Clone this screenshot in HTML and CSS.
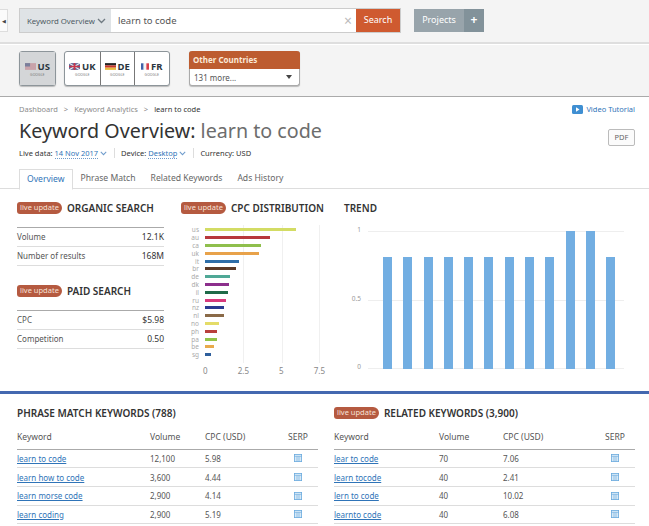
FILE: index.html
```html
<!DOCTYPE html>
<html lang="en">

<head>
    <meta charset="UTF-8">
    <title>Keyword Overview: learn to code</title>
    <link rel="stylesheet" href="styles.css">
</head>

<body>
    <div class="search-bar">
        <span class="side-toggle">&#9664;</span>
        <div class="search-group">
            <span class="search-type">Keyword Overview <svg class="chevron" width="9" height="6" viewBox="0 0 9 6"><path d="M1 1l3.500 3.500L8 1" fill="none" stroke="#6f7a82" stroke-width="1.300"/></svg></span>
            <span class="search-input">learn to code<span class="search-clear">&times;</span></span>
            <span class="search-btn">Search</span>
        </div>
        <div class="projects">
            <span class="projects-label">Projects</span>
            <span class="projects-add">+</span>
        </div>
    </div>

    <div class="country-bar">
        <div class="country-group">
            <div class="country active">
                <span class="country-name"><svg class="flag" viewBox="0 0 13 8"><rect width="13" height="8" fill="#c9a3aa"/><rect width="6" height="4" fill="#7a7f9c"/></svg>US</span>
                <span class="country-sub">GOOGLE</span>
            </div>
        </div>
        <div class="country-group">
            <div class="country">
                <span class="country-name"><svg class="flag" viewBox="0 0 13 8"><rect width="13" height="8" fill="#5a6a9c"/><path d="M0 0l13 8M13 0L0 8" stroke="#eee" stroke-width="1.500"/><path d="M6.500 0v8M0 4h13" stroke="#c8364a" stroke-width="2"/></svg>UK</span>
                <span class="country-sub">GOOGLE</span>
            </div>
            <div class="country">
                <span class="country-name"><svg class="flag" viewBox="0 0 13 8"><rect width="13" height="2.700" fill="#222"/><rect y="2.700" width="13" height="2.700" fill="#c8362c"/><rect y="5.400" width="13" height="2.600" fill="#e8b93a"/></svg>DE</span>
                <span class="country-sub">GOOGLE</span>
            </div>
            <div class="country">
                <span class="country-name"><svg class="flag flag-fr" viewBox="0 0 10 8"><rect width="3.300" height="8" fill="#3f62a8"/><rect x="3.300" width="3.400" height="8" fill="#f4f4f4"/><rect x="6.700" width="3.300" height="8" fill="#d8404a"/></svg>FR</span>
                <span class="country-sub">GOOGLE</span>
            </div>
        </div>
        <div class="other-countries">
            <div class="other-title">Other Countries</div>
            <div class="other-select">131 more...<span class="other-arrow"></span></div>
        </div>
    </div>

    <div class="page-head">
        <div class="crumbs-row">
            <div class="crumbs">
                <span>Dashboard</span><span class="crumb-sep">&gt;</span><span>Keyword Analytics</span><span class="crumb-sep">&gt;</span><span class="crumb-current">learn to code</span>
            </div>
            <a class="video-link"><svg width="11" height="9" viewBox="0 0 11 9"><rect width="11" height="9" rx="1.500" fill="#3f8fd2"/><path d="M4 2.200l3.500 2.300L4 6.800z" fill="#fff"/></svg>Video Tutorial</a>
        </div>
        <div class="title-row">
            <h1>Keyword Overview: <span class="title-query">learn to code</span></h1>
            <span class="pdf-btn">PDF</span>
        </div>
        <div class="meta">
            <span class="meta-item">Live data: <a>14 Nov 2017</a><svg class="chevron" width="7" height="5" viewBox="0 0 9 6"><path d="M1 1l3.500 3.500L8 1" fill="none" stroke="#6f9ccc" stroke-width="1.300"/></svg></span>
            <span class="meta-item">Device: <a>Desktop</a><svg class="chevron" width="7" height="5" viewBox="0 0 9 6"><path d="M1 1l3.500 3.500L8 1" fill="none" stroke="#6f9ccc" stroke-width="1.300"/></svg></span>
            <span class="meta-item">Currency: USD</span>
        </div>
        <ul class="tabs">
            <li class="tab active">Overview</li>
            <li class="tab">Phrase Match</li>
            <li class="tab">Related Keywords</li>
            <li class="tab">Ads History</li>
        </ul>
    </div>

    <div class="overview">
        <section class="summary">
            <h2><span class="badge">live update</span>ORGANIC SEARCH</h2>
            <table class="stats">
                <tr><td>Volume</td><td class="stat-value">12.1K</td></tr>
                <tr><td>Number of results</td><td class="stat-value">168M</td></tr>
            </table>
            <h2 class="paid-title"><span class="badge">live update</span>PAID SEARCH</h2>
            <table class="stats">
                <tr><td>CPC</td><td class="stat-value">$5.98</td></tr>
                <tr><td>Competition</td><td class="stat-value">0.50</td></tr>
            </table>
        </section>

        <section class="cpc">
            <h2><span class="badge">live update</span>CPC DISTRIBUTION</h2>
            <div class="cpc-chart">
                <div class="cpc-rows">
                    <div class="cpc-row"><span>us</span><i style="width:91px;background:#d3dc64"></i></div>
                    <div class="cpc-row"><span>au</span><i style="width:65px;background:#b8383c"></i></div>
                    <div class="cpc-row"><span>ca</span><i style="width:56px;background:#8fbf4d"></i></div>
                    <div class="cpc-row"><span>uk</span><i style="width:54px;background:#e8a24a"></i></div>
                    <div class="cpc-row"><span>it</span><i style="width:34px;background:#2f6ea8"></i></div>
                    <div class="cpc-row"><span>br</span><i style="width:31px;background:#5c3a26"></i></div>
                    <div class="cpc-row"><span>de</span><i style="width:25px;background:#4fa896"></i></div>
                    <div class="cpc-row"><span>dk</span><i style="width:24px;background:#8c2f8c"></i></div>
                    <div class="cpc-row"><span>il</span><i style="width:23px;background:#1f6a48"></i></div>
                    <div class="cpc-row"><span>ru</span><i style="width:21px;background:#d83a7c"></i></div>
                    <div class="cpc-row"><span>nz</span><i style="width:19px;background:#2a3a90"></i></div>
                    <div class="cpc-row"><span>nl</span><i style="width:19px;background:#8a6a48"></i></div>
                    <div class="cpc-row"><span>no</span><i style="width:14px;background:#e4dc68"></i></div>
                    <div class="cpc-row"><span>ph</span><i style="width:12px;background:#b8403c"></i></div>
                    <div class="cpc-row"><span>pa</span><i style="width:12px;background:#92c448"></i></div>
                    <div class="cpc-row"><span>be</span><i style="width:9px;background:#e8aa4c"></i></div>
                    <div class="cpc-row"><span>sg</span><i style="width:6px;background:#2f5f9c"></i></div>
                </div>
                <div class="cpc-axis"><span>0</span><span>2.5</span><span>5</span><span>7.5</span></div>
            </div>
        </section>

        <section class="trend">
            <h2>TREND</h2>
            <div class="trend-chart">
                <div class="trend-lines">
                    <span class="trend-line"><em>1</em></span>
                    <span class="trend-line"><em>0.5</em></span>
                    <span class="trend-line"><em>0</em></span>
                </div>
                <div class="trend-bars">
                    <i></i><i></i><i></i><i></i><i></i><i></i><i></i><i></i><i></i><i class="peak"></i><i class="peak"></i><i></i>
                </div>
            </div>
        </section>
    </div>

    <div class="keywords">
        <section class="kw-block">
            <h2>PHRASE MATCH KEYWORDS (788)</h2>
            <table class="kw-table">
                <tr><th>Keyword</th><th>Volume</th><th>CPC (USD)</th><th class="serp">SERP</th></tr>
                <tr><td><a>learn to code</a></td><td>12,100</td><td>5.98</td><td class="serp"><svg class="serp-icon" viewBox="0 0 8 8"><use href="#serp"/></svg></td></tr>
                <tr><td><a>learn how to code</a></td><td>3,600</td><td>4.44</td><td class="serp"><svg class="serp-icon" viewBox="0 0 8 8"><use href="#serp"/></svg></td></tr>
                <tr><td><a>learn morse code</a></td><td>2,900</td><td>4.14</td><td class="serp"><svg class="serp-icon" viewBox="0 0 8 8"><use href="#serp"/></svg></td></tr>
                <tr><td><a>learn coding</a></td><td>2,900</td><td>5.19</td><td class="serp"><svg class="serp-icon" viewBox="0 0 8 8"><use href="#serp"/></svg></td></tr>
            </table>
        </section>
        <section class="kw-block">
            <h2><span class="badge">live update</span>RELATED KEYWORDS (3,900)</h2>
            <table class="kw-table related">
                <tr><th>Keyword</th><th>Volume</th><th>CPC (USD)</th><th class="serp">SERP</th></tr>
                <tr><td><a>lear to code</a></td><td>70</td><td>7.06</td><td class="serp"><svg class="serp-icon" viewBox="0 0 8 8"><use href="#serp"/></svg></td></tr>
                <tr><td><a>learn tocode</a></td><td>40</td><td>2.41</td><td class="serp"><svg class="serp-icon" viewBox="0 0 8 8"><use href="#serp"/></svg></td></tr>
                <tr><td><a>lern to code</a></td><td>40</td><td>10.02</td><td class="serp"><svg class="serp-icon" viewBox="0 0 8 8"><use href="#serp"/></svg></td></tr>
                <tr><td><a>learnto code</a></td><td>40</td><td>6.08</td><td class="serp"><svg class="serp-icon" viewBox="0 0 8 8"><use href="#serp"/></svg></td></tr>
            </table>
        </section>
    </div>

    <svg class="icon-defs" width="0" height="0">
        <symbol id="serp" viewBox="0 0 8 8">
            <rect x=".4" y=".4" width="7.200" height="7.200" fill="#d6e8f6" stroke="#6aaade" stroke-width=".8"/>
            <path d="M.4 2.400h7.200M3 2.400v5.200M5 2.400v5.200" stroke="#6aaade" stroke-width=".6"/>
        </symbol>
    </svg>
</body>

</html>
```
FILE: styles.css
```css
* {
    box-sizing: border-box;
}

html,
body {
    height: 526px;
    overflow: hidden;
}

body {
    margin: 0;
    background-color: #fff;
    color: #333;
    font-family: "Noto Sans", "Open Sans", sans-serif;
    font-size: 9px;
}

h1,
h2,
ul {
    margin: 0;
    padding: 0;
    list-style: none;
}

a {
    color: #2f74b8;
}

table {
    border-collapse: collapse;
}

.icon-defs {
    display: block;
    height: 0;
}

/* top bars */
.search-bar {
    display: flex;
    align-items: flex-start;
    height: 44px;
    padding-top: 9px;
    background-color: #f4f4f4;
    border-bottom: 2px solid #dedede;
}

.side-toggle {
    display: flex;
    align-items: center;
    justify-content: flex-end;
    width: 8px;
    height: 23px;
    padding-right: 1px;
    margin-right: 12px;
    background-color: #fbfbfb;
    border: 1px solid #ddd;
    border-left: 0;
    font-size: 5px;
    color: #444;
}

.search-group {
    display: flex;
    width: 380px;
    height: 23px;
    box-shadow: 0 0 0 1px #ccc;
}

.search-type {
    display: flex;
    align-items: center;
    justify-content: space-between;
    width: 91px;
    padding: 0 5px 0 7px;
    background-color: #dfe3e6;
    color: #4d5a63;
    font-size: 7.800px;
    white-space: nowrap;
}

.search-input {
    position: relative;
    flex: 1;
    padding-left: 7px;
    background-color: #fff;
    font-size: 9.500px;
    line-height: 23px;
    color: #555;
}

.search-clear {
    position: absolute;
    right: 4px;
    top: 0;
    color: #bbb;
    font-size: 14px;
}

.search-btn {
    width: 44px;
    background-color: #cf5a30;
    color: #fff;
    font-size: 9px;
    line-height: 22px;
    text-align: center;
}

.projects {
    display: flex;
    height: 23px;
    margin-left: 14px;
    color: #fff;
    font-size: 9px;
    line-height: 22px;
    text-align: center;
}

.projects-label {
    width: 50px;
    background-color: #98a4ab;
}

.projects-add {
    width: 20px;
    background-color: #82929a;
    font-size: 12px;
    font-weight: 700;
}

.country-bar {
    display: flex;
    align-items: flex-start;
    height: 53px;
    padding: 6px 0 0 19px;
    background-color: #f4f4f4;
    border-top: 1px solid #fff;
    border-bottom: 1px solid #aaa;
}

.country-group {
    display: flex;
    height: 35px;
    margin-right: 8.500px;
    background-color: #fff;
    border: 1px solid #8d959a;
    border-radius: 3px;
    box-shadow: 0 1px 1px #bbb;
}

.country {
    display: flex;
    flex-direction: column;
    align-items: center;
    justify-content: center;
    width: 34.500px;
    border-left: 1px solid #777;
}

.country:first-child {
    border-left: 0;
}

.country.active {
    background-color: #d4d6d8;
}

.country-name {
    display: flex;
    align-items: center;
    gap: 2px;
    font-size: 9.500px;
    font-weight: 700;
    line-height: 11px;
    color: #2b3640;
}

.country-sub {
    font-size: 3.500px;
    line-height: 5px;
    color: #777;
}

.flag {
    width: 11px;
    height: 7px;
}

.flag-fr {
    width: 8px;
}

.other-countries {
    width: 111px;
    height: 35px;
    margin-left: 11px;
    background-color: #fff;
    border: 1px solid #aaa;
    border-top: 0;
    border-radius: 3px;
    box-shadow: 0 1px 1px #bbb;
}

.other-title {
    height: 18px;
    padding-left: 4px;
    margin: 0 -1px;
    background-color: #bd5c30;
    border-radius: 3px 3px 0 0;
    color: #fbe9d8;
    font-size: 8px;
    font-weight: 700;
    line-height: 18px;
}

.other-select {
    display: flex;
    align-items: center;
    justify-content: space-between;
    height: 16px;
    padding: 0 7px 0 4px;
    font-size: 8px;
    color: #555;
}

.other-arrow {
    width: 0;
    height: 0;
    border-left: 3.500px solid transparent;
    border-right: 3.500px solid transparent;
    border-top: 4px solid #444;
}

/* page heading */
.page-head {
    height: 92px;
    padding: 6px 14px 0 19px;
    border-bottom: 1px solid #ddd;
}

.crumbs-row,
.title-row {
    display: flex;
    justify-content: space-between;
}

.crumbs-row {
    align-items: center;
    height: 12px;
    font-size: 7.500px;
    color: #8b8b8b;
}

.crumb-sep {
    margin: 0 6px;
}

.crumb-current {
    color: #333;
}

.video-link {
    display: flex;
    align-items: center;
    gap: 3px;
    font-size: 7.500px;
}

.title-row {
    align-items: flex-start;
    height: 28px;
    margin-top: 2px;
}

h1 {
    font-size: 19.700px;
    font-weight: 400;
    line-height: 28px;
    color: #333;
}

.title-query {
    color: #6d6d6d;
}

.pdf-btn {
    width: 27px;
    height: 17px;
    margin-top: 12px;
    background-color: #fbfbfb;
    border: 1px solid #bbb;
    border-radius: 2px;
    color: #666;
    font-size: 7.500px;
    line-height: 15px;
    text-align: center;
}

.meta {
    display: flex;
    align-items: center;
    height: 12px;
    margin-top: 2px;
    font-size: 7.500px;
}

.meta a {
    border-bottom: 1px dotted #6f9ccc;
}

.meta .chevron {
    margin-left: 2px;
}

.meta-item {
    padding-right: 7px;
    margin-right: 6px;
    border-right: 1px solid #ddd;
}

.meta-item:last-child {
    border-right: 0;
}

.tabs {
    display: flex;
    height: 20px;
    margin-top: 10px;
}

.tab {
    padding: 0 7px;
    margin-right: 1px;
    color: #666;
    font-size: 8.600px;
    line-height: 19px;
}

.tab.active {
    background-color: #fff;
    border: 1px solid #ddd;
    border-bottom: 1px solid #fff;
    color: #2f74b8;
    height: 21px;
    line-height: 18px;
}

/* overview row */
.overview {
    display: flex;
    height: 205px;
    padding-top: 12px;
    border-bottom: 3px solid #4468b0;
}

h2 {
    display: flex;
    align-items: center;
    height: 14px;
    color: #333;
    font-size: 10px;
    font-weight: 600;
}

.badge {
    height: 12px;
    padding: 0 3px;
    margin-right: 5px;
    background-color: #b55a40;
    border-radius: 3px 6px 6px 3px;
    color: #f7e3d8;
    font-size: 7.500px;
    font-weight: 400;
    line-height: 11px;
}

.summary {
    width: 164px;
    margin-left: 17px;
}

.stats {
    width: 147px;
    margin-top: 12px;
    border-top: 1px solid #aaa;
}

.stats td {
    height: 19px;
    padding: 0 0 1px;
    border-bottom: 1px solid #ddd;
    color: #555;
    font-size: 8px;
}

.stats .stat-value {
    color: #333;
    font-size: 8.500px;
    text-align: right;
}

.paid-title {
    margin-top: 18px;
}

.cpc {
    width: 163px;
}

.cpc-chart {
    position: relative;
    width: 140px;
    margin-top: 10px;
}

.cpc-rows {
    height: 138px;
    padding-top: 1px;
    margin-left: 24px;
    background-image:
        linear-gradient(#f0f0f0, #f0f0f0),
        linear-gradient(#f0f0f0, #f0f0f0),
        linear-gradient(#f0f0f0, #f0f0f0);
    background-position: 38px 0, 77px 0, 114px 0;
    background-size: 1px 100%;
    background-repeat: no-repeat;
}

.cpc-row {
    position: relative;
    display: flex;
    align-items: center;
    height: 7.800px;
}

.cpc-row span {
    position: absolute;
    left: -22px;
    width: 16px;
    color: #aaa;
    font-size: 6.500px;
    text-align: right;
}

.cpc-row i {
    display: block;
    height: 3px;
}

.cpc-axis {
    display: flex;
    justify-content: space-between;
    width: 122px;
    margin: 2px 0 0 22px;
    color: #888;
    font-size: 8px;
}

.trend {
    flex: 1;
}

.trend-chart {
    position: relative;
    width: 280px;
    height: 138px;
    margin-top: 16px;
}

.trend-lines {
    position: absolute;
    inset: 0;
    display: flex;
    flex-direction: column;
    justify-content: space-between;
}

.trend-line {
    position: relative;
    display: block;
    height: 1px;
    margin-left: 24px;
    background-color: #eee;
}

.trend-line em {
    position: absolute;
    left: -24px;
    top: -6px;
    width: 17px;
    color: #999;
    font-size: 6.500px;
    font-style: normal;
    text-align: right;
}

.trend-bars {
    position: absolute;
    left: 39px;
    top: 0;
    display: flex;
    align-items: flex-end;
    gap: 11.300px;
    height: 138px;
}

.trend-bars i {
    display: block;
    width: 9px;
    height: 112px;
    background-color: #72aee2;
}

.trend-bars .peak {
    height: 138px;
}

/* keyword tables */
.keywords {
    display: flex;
    gap: 16px;
    padding: 12px 14px 0 17px;
}

.kw-block {
    width: 302px;
}

.kw-table {
    width: 100%;
    margin-top: 5px;
    table-layout: fixed;
}

.kw-table th,
.kw-table td {
    padding: 0;
    border-bottom: 1px solid #ddd;
    font-weight: 400;
    text-align: left;
}

.kw-table th {
    height: 24px;
    color: #555;
    font-size: 8.500px;
    border-bottom-color: #aaa;
}

.kw-table td {
    height: 18.700px;
    color: #555;
    font-size: 8px;
}

.kw-table th:nth-child(1) {
    width: 133px;
}

.kw-table th:nth-child(2) {
    width: 55px;
}

.kw-table th:nth-child(3) {
    width: 73px;
}

.related th:nth-child(1) {
    width: 105px;
}

.related th:nth-child(2) {
    width: 64px;
}

.related th:nth-child(3) {
    width: 92px;
}

.kw-table a {
    text-decoration: underline;
}

.kw-table .serp {
    text-align: center;
}

.serp-icon {
    display: block;
    width: 8px;
    height: 8px;
    margin: 0 auto;
}
```
